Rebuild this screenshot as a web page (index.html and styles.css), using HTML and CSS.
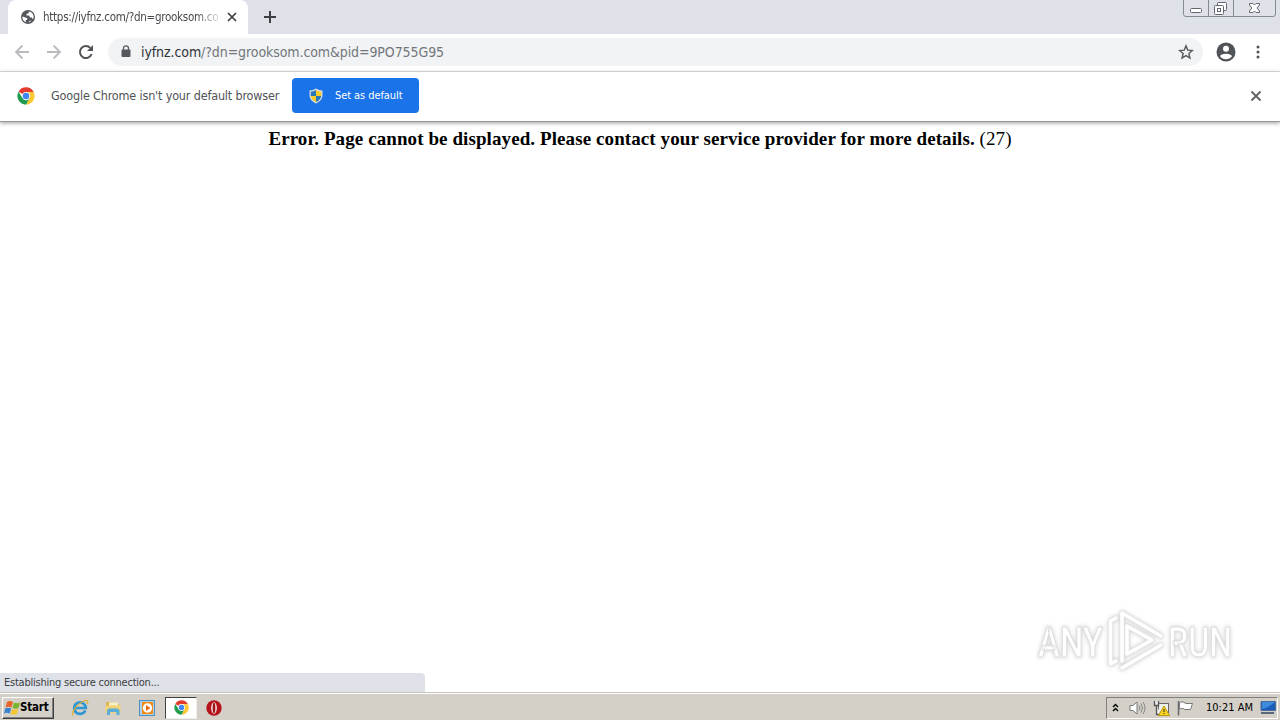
FILE: index.html
```
<!DOCTYPE html>
<html lang="en">
<head>
<meta charset="utf-8">
<title>iyfnz.com</title>
<link rel="stylesheet" href="styles.css">
</head>
<body>
<svg width="0" height="0" class="defs" aria-hidden="true">
  <symbol id="chrome" viewBox="0 0 48 48">
    <path fill="#e33b2e" d="M24 24 4.100 12.500A23 23 0 0 1 44.500 13.500H24z"/>
    <path fill="#fcc934" d="M24 13.500H44.500A23 23 0 0 1 24 47L33.500 29z"/>
    <path fill="#1e9b4d" d="M4.100 12.500A23 23 0 0 0 24 47L33.500 29 24 24 14.500 29z"/>
    <circle cx="24" cy="24" r="11" fill="#fff"/><circle cx="24" cy="24" r="8.700" fill="#4285f4"/>
  </symbol>
</svg>
<div class="screen">
  <header class="tabstrip">
    <div class="tab">
      <svg class="globe" width="14" height="14" viewBox="0 0 14 14"><circle cx="7" cy="7" r="7" fill="#55595e"/><path fill="#fff" d="M8.200 1.500 7.500 3 5.500 4.200V5.600H8.200L9 7.500H11V9L12.600 8A5.700 5.700 0 0 0 8.200 1.500zM1.400 6.500 4.500 7.400 6.500 8.500 6 10H4.800V12.200A5.700 5.700 0 0 1 1.400 6.500zM7.500 12.600 8.500 11 10.500 10.500A5.700 5.700 0 0 1 7.500 12.600z"/></svg>
      <span class="tab-title"><span class="t-tab">https://iyfnz.com/?dn=grooksom.co</span></span>
      <svg class="tab-close" width="10" height="10" viewBox="0 0 10 10"><path d="M1 1 9 9M9 1 1 9" stroke="#3c4043" stroke-width="1.700"/></svg>
    </div>
    <svg class="plus" width="14" height="14" viewBox="0 0 14 14"><path d="M7 1V13M1 7H13" stroke="#3c4043" stroke-width="2"/></svg>
    <svg class="winctl" width="94" height="18" viewBox="0 0 94 18"><path d="M.5 0V14Q.5 16.500 3 16.500H90Q92.500 16.500 92.500 14V0M25.500 0V16M50.500 0V16" fill="none" stroke="#868a92"/><g fill="#fff" stroke="#62666e"><rect x="7.500" y="8.500" width="11" height="4" rx="1"/><rect x="34.500" y="2.500" width="9" height="8" rx="1"/><rect x="31.500" y="5.500" width="9" height="9" rx="1"/><rect x="34.500" y="8.500" width="3" height="3"/></g><path d="M66.500 3.500H70L71.500 5 73 3.500H76.500V5L74 8 76.500 11V12.500H73L71.500 11 70 12.500H66.500V11L69 8 66.500 5z" fill="#fff" stroke="#62666e"/></svg>
  </header>
  <div class="toolbar">
    <svg class="back" width="16" height="16" viewBox="0 0 16 16"><path d="M15 8H2M8.500 1.500 2 8 8.500 14.500" fill="none" stroke="#b9bbbe" stroke-width="1.800"/></svg>
    <svg class="fwd" width="16" height="16" viewBox="0 0 16 16"><path d="M1 8H14M7.500 1.500 14 8 7.500 14.500" fill="none" stroke="#b9bbbe" stroke-width="1.800"/></svg>
    <svg class="reload" width="16" height="16" viewBox="0 0 16 16"><path d="M13.600 10A6 6 0 1 1 12.300 3.900" fill="none" stroke="#505357" stroke-width="2"/><path d="M15 1V7H9z" fill="#505357"/></svg>
    <div class="omnibox">
      <svg class="lock" width="10" height="13" viewBox="0 0 10 13"><rect x=".5" y="4.500" width="9" height="7.500" rx="1" fill="#55595e"/><path d="M2.500 5V3.200a2.500 2.300 0 0 1 5 0V5" fill="none" stroke="#55595e" stroke-width="1.300"/></svg>
      <span class="url"><b>iyfnz.com</b>/?dn=grooksom.com&amp;pid=9PO755G95</span>
      <svg class="star" width="16" height="16" viewBox="0 0 24 24"><path d="M12 2.800 14.600 9.200 21.600 9.800 16.300 14.300 17.900 21 12 17.400 6.100 21 7.700 14.300 2.400 9.800 9.400 9.200z" fill="none" stroke="#55595e" stroke-width="2.100"/></svg>
    </div>
    <svg class="avatar" width="20" height="20" viewBox="0 0 20 20"><circle cx="10" cy="10" r="9.500" fill="#505459"/><circle cx="10" cy="6.800" r="3" fill="#fff"/><path d="M4 14.200C4.500 10.800 15.500 10.800 16 14.200A7.500 7.500 0 0 1 4 14.200z" fill="#fff"/></svg>
    <svg class="dots" width="4" height="14" viewBox="0 0 4 14"><g fill="#505459"><circle cx="2" cy="2" r="1.500"/><circle cx="2" cy="7" r="1.500"/><circle cx="2" cy="12" r="1.500"/></g></svg>
  </div>
  <div class="infobar">
    <svg class="logo" width="18" height="18"><use href="#chrome"/></svg>
    <span class="info-text">Google Chrome isn't your default browser</span>
    <button class="default-btn">
      <svg width="14" height="16" viewBox="0 0 14 16"><path d="M7 .5Q10 2.500 13.500 2.500V8Q13 13 7 15.500 1 13 .5 8V2.500Q4 2.500 7 .5z" fill="#d5dcdf"/><path d="M7 2V8H1.800V3.700Q4.500 3.600 7 2zM7 8H12.200Q11.500 12 7 14z" fill="#2878b8"/><path d="M7 2Q9.500 3.600 12.200 3.700V8H7zM7 8V14Q2.500 12 1.800 8z" fill="#f5cb28"/></svg>
      <span>Set as default</span>
    </button>
    <svg class="info-close" width="12" height="12" viewBox="0 0 12 12"><path d="M1.500 1.500 10.500 10.500M10.500 1.500 1.500 10.500" stroke="#606368" stroke-width="1.900"/></svg>
  </div>
  <main class="page">
    <p class="error"><b>Error. Page cannot be displayed. Please contact your service provider for more details.</b> (27)</p>
    <div class="status"><span>Establishing secure connection...</span></div>
    <svg class="watermark" width="210" height="76" viewBox="0 0 210 76">
      <g class="wm"><text x="8" y="53" textLength="65" lengthAdjust="spacingAndGlyphs">ANY</text><text x="138" y="53" textLength="64" lengthAdjust="spacingAndGlyphs">RUN</text>
      <path class="edge" d="M86 14 80.500 17V60L86 57M92 57V9L131 32M97 22 122 36 97 50zM92 64 131 41"/>
      <path class="band" d="M86 14 80.500 17V60L86 57M92 57V9L131 32M97 22 122 36 97 50zM92 64 131 41"/></g>
    </svg>
  </main>
  <footer class="taskbar">
    <div class="start">
      <svg width="17" height="16" viewBox="0 0 17 16"><path fill="#e7652b" d="M3 2Q6 0 9 2L7.500 7.500Q4.500 6 1.500 7.500z"/><path fill="#78b52d" d="M10 2.500Q13 4 16 2.500L14.500 8Q11.500 9.500 8.500 8z"/><path fill="#3c83cf" d="M1.200 8.500Q4 7 7.200 8.500L5.700 13.500Q3 12 0 13.500z"/><path fill="#f6c42c" d="M8.200 9Q11 10.500 14.200 9L12.700 14Q10 15.500 6.700 14z"/></svg>
      <b>Start</b>
    </div>
    <svg class="ie" width="18" height="18" viewBox="0 0 18 18"><path d="M14.300 11.500A5.800 5.800 0 1 1 14.800 9H4" fill="none" stroke="#2f96d4" stroke-width="2.700"/><path d="M2.500 16.500C-1 15 6 5 12 2.500 16 .5 18 1.500 16 5" fill="none" stroke="#d9af37" stroke-width="1.300"/></svg>
    <svg class="folder" width="16" height="16" viewBox="0 0 16 16"><path d="M1 2H6L7 4H14V13H1z" fill="#dcb650"/><rect x="4" y="2.500" width="9" height="5" fill="#f7edc0"/><path d="M.5 5.500H15.500V13H.5z" fill="#f0d277"/><path d="M2 15V11Q2 8.500 5 8.500H11.500Q14.500 8.500 14.500 11V15H11.500V12H5V15z" fill="#58addb"/></svg>
    <svg class="media" width="16" height="16" viewBox="0 0 16 16"><rect x=".5" y=".5" width="15" height="15" fill="#b1d1e9" stroke="#4c92bf"/><rect x="3" y="2" width="11" height="12" fill="#f18b17"/><circle cx="8.500" cy="8" r="4.700" fill="#fff"/><path d="M7 5 11.500 8 7 11z" fill="#e56c13"/></svg>
    <div class="task-active"><svg width="15" height="15"><use href="#chrome"/></svg></div>
    <svg class="opera" width="16" height="16" viewBox="0 0 16 16"><circle cx="8" cy="8" r="7.700" fill="#b5121b"/><ellipse cx="8" cy="8" rx="2.900" ry="5.800" fill="#f2dfdc"/><ellipse cx="8" cy="8" rx="1.300" ry="5.200" fill="#9f1118"/></svg>
    <div class="tray">
      <svg class="chev" width="7" height="9" viewBox="0 0 7 9"><path d="M1 4 3.500 1.500 6 4M1 8 3.500 5.500 6 8" fill="none" stroke="#000" stroke-width="1.400"/></svg>
      <svg class="sound" width="17" height="16" viewBox="0 0 17 16"><path d="M1 5.500H4L8 2V14L4 10.500H1z" fill="#fff" stroke="#77797a"/><path d="M10 5.500Q12 8 10 10.500M12 3.500Q15 8 12 12.500M14 2Q18 8 14 14" fill="none" stroke="#88898a"/></svg>
      <svg class="net" width="17" height="16" viewBox="0 0 17 16"><rect x="5.500" y="3.500" width="10" height="9" fill="#eee" stroke="#666"/><path d="M1.500 1V5.500H5.500V1M3.500 5V14.500H8" fill="#eee" stroke="#555" stroke-width="1.300"/><path d="M11 6 16.500 15.500H5.500z" fill="#f8d51f" stroke="#bc970d"/><path d="M11 9V12M11 13V14" stroke="#222"/></svg>
      <svg class="flag" width="17" height="16" viewBox="0 0 17 16"><path d="M1.500 1V15.500" stroke="#66686a" stroke-width="1.500"/><path d="M2.500 2.500Q6 .5 9 3.500H15.500L13.500 9.500H8Q6 7.500 2.500 9z" fill="#fff" stroke="#77797a"/></svg>
      <time>10:21 AM</time>
      <svg class="monitor" width="16" height="13" viewBox="0 0 16 13"><path d="M1 .5H15.500V9.500H1z" fill="#1b5db9" stroke="#486b99"/><path d="M2 8Q8 7 14.500 1.500V1H2z" fill="#3d8bdc"/><path d="M1 12H14" stroke="#5a697a" stroke-width="2"/></svg>
    </div>
  </footer>
</div>
</body>
</html>
```
FILE: styles.css
```
* { box-sizing: border-box; }
body { margin: 0; overflow: hidden; background: #fff; font-family: "DejaVu Sans Condensed", "DejaVu Sans", sans-serif; font-stretch: condensed; }
.defs { position: absolute; }
svg { flex: none; display: block; }
.screen { display: flex; flex-direction: column; width: 1280px; height: 720px; }
.tabstrip { display: flex; height: 34px; flex: none; background: #dee1e8; padding-left: 8px; }
.tab { display: flex; align-items: center; width: 240px; height: 34px; background: #fff; border-radius: 8px 8px 0 0; padding-left: 13px; }
.tab-title { width: 177px; margin-left: 8px; white-space: nowrap; font-size: 11.500px; line-height: 20px; color: #45484c; -webkit-mask-image: linear-gradient(90deg, #000 153px, transparent 180px); mask-image: linear-gradient(90deg, #000 153px, transparent 180px); }
.t-tab { letter-spacing: -0.270px; }
.tab-close { margin-left: 7px; }
.plus { margin: 10px 0 0 15px; }
.winctl { margin: 0 3px 0 auto; }
.toolbar { display: flex; align-items: center; height: 38px; flex: none; padding: 0 20px 2px 14px; border-bottom: 1px solid #dcdee2; }
.fwd { margin-left: 16px; }
.reload { margin-left: 16px; }
.omnibox { display: flex; align-items: center; width: 1095px; height: 28px; margin-left: 14px; padding: 0 9px 0 13px; background: #f1f3f4; border-radius: 14px; }
.url { margin-left: 10px; font-size: 14px; font-weight: 400; letter-spacing: -0.090px; color: #73777c; white-space: nowrap; }
.url b { font-weight: 400; color: #303236; }
.star { margin-left: auto; }
.avatar { margin-left: 13px; }
.dots { margin-left: 20px; }
.infobar { position: relative; display: flex; align-items: center; height: 50px; flex: none; padding: 0 18px 2px 17px; border-bottom: 1px solid #96989a; box-shadow: 0 1px 4px #999; }
.info-text { width: 228px; margin-left: 16px; font-size: 12.500px; letter-spacing: -0.170px; white-space: nowrap; color: #505357; }
.default-btn { display: flex; align-items: center; width: 127px; height: 35px; margin-left: 13px; padding: 0 0 0 17px; border: 0; border-radius: 4px; background: #1a73e8; color: #fff; font: 11px "DejaVu Sans Condensed", sans-serif; letter-spacing: -0.080px; white-space: nowrap; }
.default-btn span { margin-left: 12px; }
.info-close { margin-left: auto; }
.page { flex: 1; min-height: 0; position: relative; display: flex; flex-direction: column; justify-content: space-between; }
.error { margin: 6px 0 0; text-align: center; font: 19px/22px "Liberation Serif", serif; letter-spacing: 0.090px; color: #000; white-space: nowrap; }
.status { width: 425px; height: 19px; padding-left: 4px; background: #dee1e8; border-radius: 0 4px 0 0; font-size: 11px; line-height: 20px; letter-spacing: -0.230px; color: #3c4043; }
.watermark { position: absolute; left: 1030px; top: 482px; }
.wm { fill: #fff; stroke: #dedede; stroke-width: 1; stroke-linejoin: round; filter: drop-shadow(0 0 2px #ccc); }
.wm text { font: 500 43px "Roboto", sans-serif; }
.wm path { fill: none; stroke-linecap: round; }
.wm .edge { stroke: #e2e2e2; stroke-width: 5; }
.wm .band { stroke: #fff; stroke-width: 3.500; }
.taskbar { display: flex; align-items: center; height: 28px; flex: none; padding: 2px 2px 0; background: #d4d0c8; border-top: 1px solid #c4c6bd; box-shadow: inset 0 1px #fff; }
.start { display: flex; align-items: center; width: 52px; height: 22px; padding-left: 1px; border: 1px solid; border-color: #fff #404040 #404040 #fff; box-shadow: inset -1px -1px #808080; font-size: 11.500px; letter-spacing: -0.200px; color: #000; }
.start b { margin-left: -1px; margin-bottom: 1px; }
.ie { margin-left: 17px; }
.folder { margin-left: 16px; }
.media { margin-left: 18px; }
.task-active { display: flex; align-items: center; justify-content: center; width: 32px; height: 22px; margin-left: 10px; background: #fff; border: 1px solid; border-color: #404040 #eee #eee #404040; }
.opera { margin-left: 9px; }
.tray { display: flex; align-items: center; width: 172px; height: 22px; margin-left: auto; padding-left: 5px; border: 1px solid; border-color: #808080 #fff #fff #808080; font-size: 11px; color: #000; }
.sound { margin-left: 10px; }
.net { margin-left: 7px; }
.flag { margin-left: 7px; }
.tray time { width: 47px; margin-left: 12px; white-space: nowrap; }
.monitor { margin-left: 7px; }
```
